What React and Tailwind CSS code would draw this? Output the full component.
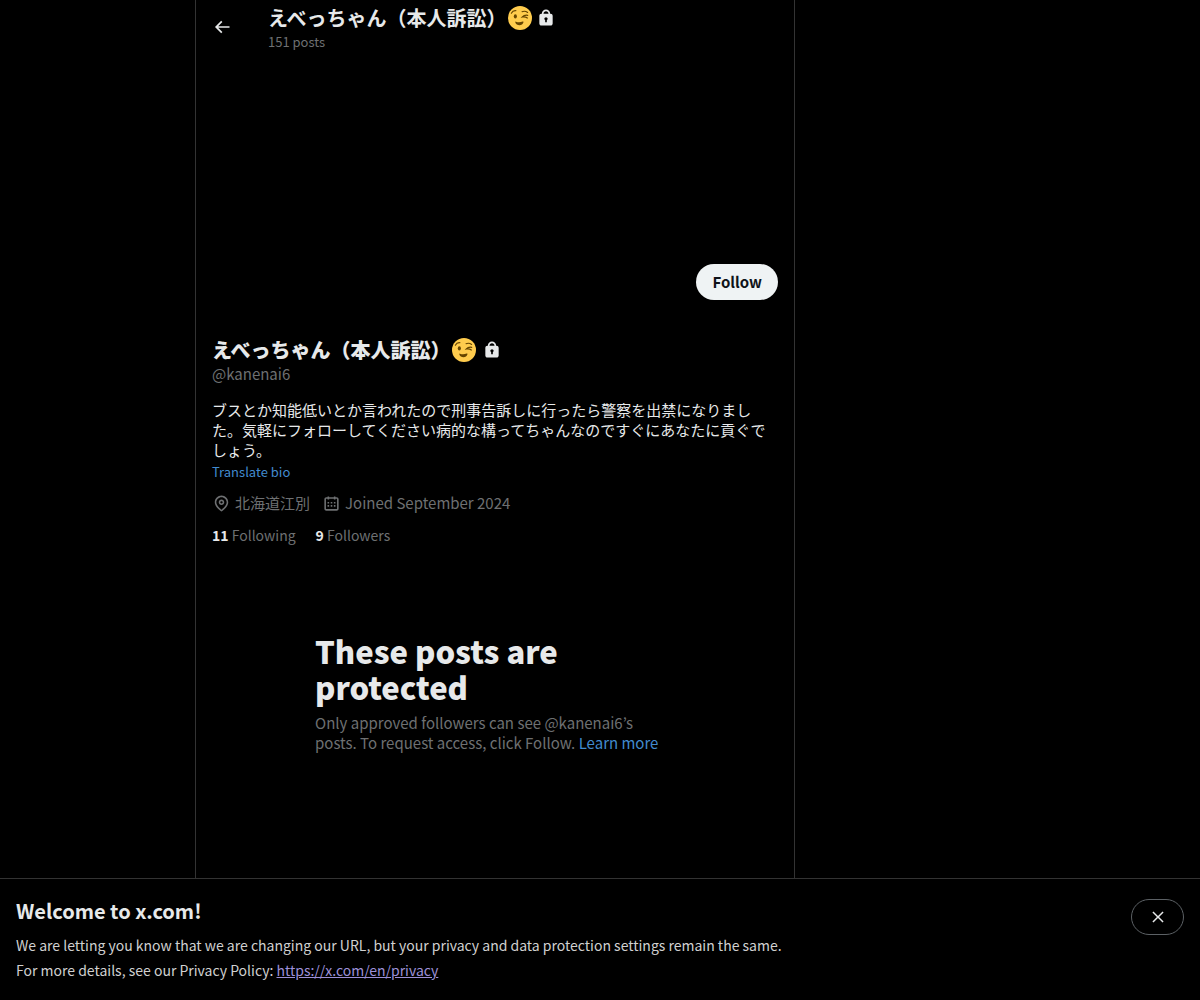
import React from "react";

const icons = {
  back: "M7.414 13l5.043 5.04-1.414 1.42L3.586 12l7.457-7.46 1.414 1.42L7.414 11H21v2H7.414z",
  close:
    "M10.59 12L4.54 5.96l1.42-1.42L12 10.59l6.04-6.05 1.42 1.42L13.41 12l6.05 6.04-1.42 1.42L12 13.41l-6.04 6.05-1.42-1.42L10.59 12z",
  lock: "M17.5 7H17v-.25c0-2.76-2.24-5-5-5s-5 2.24-5 5V7h-.5C5.12 7 4 8.12 4 9.5v9C4 19.88 5.12 21 6.5 21h11c1.39 0 2.5-1.12 2.5-2.5v-9C20 8.12 18.89 7 17.5 7zM13 14.73V17h-2v-2.27c-.59-.34-1-.99-1-1.73 0-1.1.9-2 2-2 1.11 0 2 .9 2 2 0 .74-.4 1.39-1 1.73zM15 7H9v-.25c0-1.66 1.35-3 3-3 1.66 0 3 1.34 3 3V7z",
  location:
    "M12 7c-1.93 0-3.5 1.57-3.5 3.5S10.07 14 12 14s3.5-1.57 3.5-3.5S13.93 7 12 7zm0 5c-.827 0-1.5-.673-1.5-1.5S11.173 9 12 9s1.5.673 1.5 1.5S12.827 12 12 12zm0-10c-4.687 0-8.5 3.813-8.5 8.5 0 5.967 7.621 11.116 7.945 11.332l.555.37.555-.37c.324-.216 7.945-5.365 7.945-11.332C20.5 5.813 16.687 2 12 2zm0 17.77c-1.665-1.241-6.5-5.196-6.5-9.27C5.5 6.916 8.416 4 12 4s6.5 2.916 6.5 6.5c0 4.073-4.835 8.028-6.5 9.27z",
  calendar:
    "M7 4V3h2v1h6V3h2v1h1.5C19.89 4 21 5.12 21 6.5v12c0 1.38-1.11 2.5-2.5 2.5h-13C4.12 21 3 19.88 3 18.5v-12C3 5.12 4.12 4 5.5 4H7zm0 2H5.5c-.27 0-.5.22-.5.5v12c0 .28.23.5.5.5h13c.28 0 .5-.22.5-.5v-12c0-.28-.22-.5-.5-.5H17v1h-2V6H9v1H7V6zm0 6h2v-2H7v2zm0 4h2v-2H7v2zm4-4h2v-2h-2v2zm0 4h2v-2h-2v2zm4-4h2v-2h-2v2zm0 4h2v-2h-2v2z",
};

const Icon = ({ name, className }) => (
  <svg viewBox="0 0 24 24" className={className} fill="currentColor" aria-hidden="true">
    <path d={icons[name]} />
  </svg>
);

const WinkEmoji = () => (
  <svg viewBox="0 0 36 36" className="h-6 w-6 shrink-0" role="img" aria-label="Winking face">
    <circle cx="18" cy="18" r="18" fill="#ffcc4d" />
    <ellipse cx="11" cy="15.5" rx="2.3" ry="3.3" fill="#664500" />
    <g fill="none" stroke="#664500" strokeLinecap="round">
      <path d="M5 11c1.500-3 4-4.500 7-4" strokeWidth="1.6" />
      <path d="M21 8.500c3-1.200 6-0.700 8.500 1.300" strokeWidth="1.6" />
      <path d="M29.500 14c-3-0.500-6 0.300-8 2.500c2.500-0.500 5.500 0 7.500 1.500" strokeWidth="1.8" />
    </g>
    <path
      d="M12 23.500c3.200 1.400 6.800 1.200 10-0.300c0.800-0.300 1.500 0.300 1.200 1.200c-0.800 2.600-3 4.600-6 4.600s-5.200-1.600-6.200-4.200c-0.300-0.900 0.200-1.600 1-1.300z"
      fill="#664500"
    />
  </svg>
);

// Display name with emoji and the protected account lock
const DisplayName = () => (
  <>
    <span className="mr-px">えべっちゃん（本人訴訟）</span>
    <WinkEmoji />
    <Icon name="lock" className="h-5 w-5 shrink-0" />
  </>
);

function ProfileHeader() {
  return (
    <header className="flex h-[53px] items-center px-4">
      <div className="w-14">
        <button type="button" aria-label="Back" className="flex h-5 w-5 items-center">
          <Icon name="back" className="h-5 w-5" />
        </button>
      </div>
      <div className="pb-0.5">
        <h2 className="flex h-8 items-center text-[20px] leading-6 font-bold [&>svg+svg]:ml-1">
          <DisplayName />
        </h2>
        <p className="text-[13px] leading-4 text-[#6e7072]">151 posts</p>
      </div>
    </header>
  );
}

function ProfileInfo() {
  return (
    <section className="px-4 pt-3 text-[15px] leading-5">
      <div className="flex h-[74px] justify-end">
        <button
          type="button"
          className="h-9 rounded-full bg-[#eff3f4] px-4 font-bold text-[#0f1419]"
        >
          Follow
        </button>
      </div>
      <h1 className="flex items-center text-[20px] leading-6 font-extrabold [&>svg+svg]:ml-1.5">
        <DisplayName />
      </h1>
      <p className="mt-0.5 text-[#6e7072]">@kanenai6</p>
      <p className="mt-4">
        ブスとか知能低いとか言われたので刑事告訴しに行ったら警察を出禁になりました。気軽にフォローしてください病的な構ってちゃんなのですぐにあなたに貢ぐでしょう。
      </p>
      <button type="button" className="mt-1 block text-[13px] leading-4 text-[#428bcf]">
        Translate bio
      </button>
      <ul className="mt-[13px] flex gap-3 text-[#6e7072]">
        <li className="flex items-center gap-1">
          <Icon name="location" className="h-[19px] w-[19px]" />
          北海道江別
        </li>
        <li className="flex items-center gap-1">
          <Icon name="calendar" className="h-[19px] w-[19px]" />
          Joined September 2024
        </li>
      </ul>
      <div className="mt-3 flex gap-5 text-[14px] text-[#6e7072]">
        <a href="#following">
          <b className="text-[#e7e9ea]">11</b> Following
        </a>
        <a href="#followers">
          <b className="text-[#e7e9ea]">9</b> Followers
        </a>
      </div>
    </section>
  );
}

function ProtectedNotice() {
  return (
    <section className="mx-auto mt-22 mb-8 max-w-[360px] text-[15px] leading-5">
      <h2 className="mb-2 max-w-[300px] text-[31px] leading-9 font-extrabold">
        These posts are protected
      </h2>
      <p className="text-[#6e7072]">
        Only approved followers can see @kanenai6’s posts. To request access, click Follow.{" "}
        <a href="#learn-more" className="text-[#428bcf]">
          Learn more
        </a>
      </p>
    </section>
  );
}

function WelcomeBar() {
  return (
    <aside className="sticky bottom-0 flex items-start justify-between gap-4 border-t border-[#333333] bg-black px-4 pt-5 pb-[17px]">
      <div className="text-[14px] leading-[25px] text-[#d0d0d0]">
        <h2 className="mb-2.5 text-[20px] leading-6 font-bold text-[#e7e9ea]">
          Welcome to x.com!
        </h2>
        <p>
          We are letting you know that we are changing our URL, but your privacy and data
          protection settings remain the same.
        </p>
        <p>
          For more details, see our Privacy Policy:{" "}
          <a href="#privacy" className="text-[#9d90d8] underline">
            https://x.com/en/privacy
          </a>
        </p>
      </div>
      <button
        type="button"
        aria-label="Close"
        className="flex h-9 w-[53px] shrink-0 items-center justify-center rounded-full border border-[#5c6165]"
      >
        <Icon name="close" className="h-[18px] w-[18px]" />
      </button>
    </aside>
  );
}

function App() {
  return (
    <div className="flex min-h-screen flex-col bg-black font-['Noto_Sans_CJK_JP',sans-serif] text-[#e7e9ea]">
      <div className="flex grow justify-center">
        <div className="w-[88px]" />
        <main className="w-full max-w-[600px] border-x border-[#333333]">
          <ProfileHeader />
          <div className="h-[199px]" />
          <ProfileInfo />
          <ProtectedNotice />
        </main>
        <div className="w-[298px]" />
      </div>
      <WelcomeBar />
    </div>
  );
}

export default App;
